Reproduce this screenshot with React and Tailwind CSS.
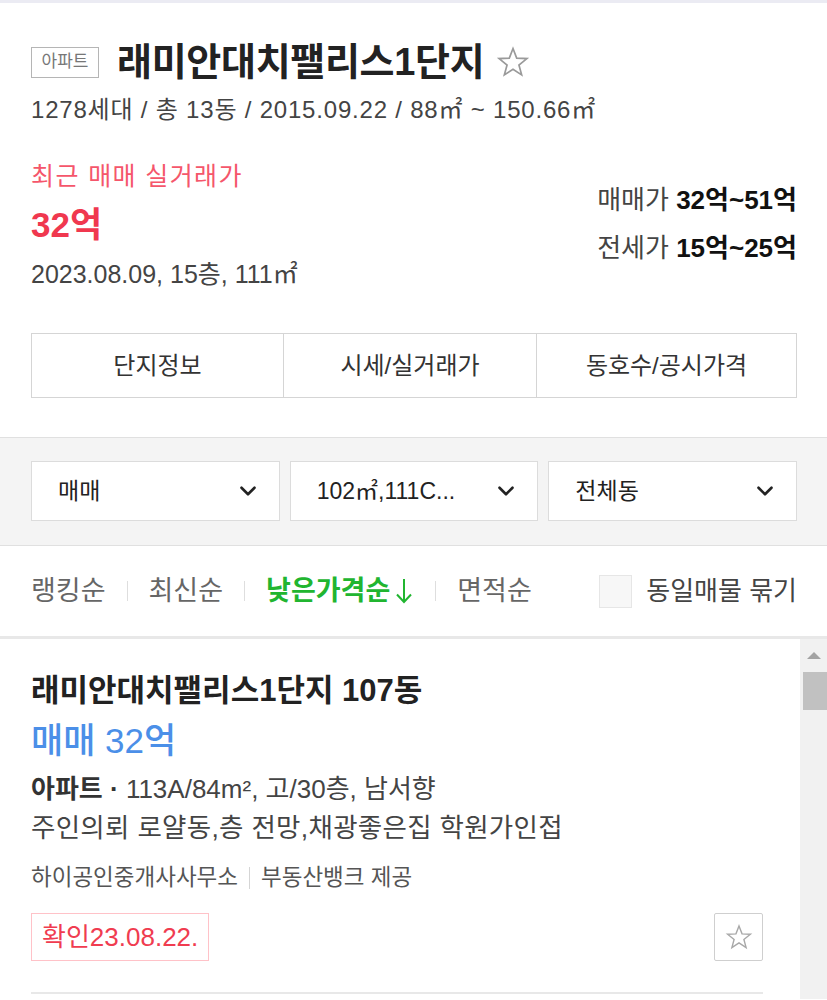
import { ChevronDown } from "lucide-react";

function StarOutline({ className }) {
  return (
    <svg viewBox="0 0 24 24" className={className} fill="none" stroke="currentColor" strokeWidth="1.2" strokeLinejoin="miter">
      <polygon points="12,2.5 14.6,9.3 21.8,9.6 16.2,14.1 18.1,21.1 12,17.1 5.9,21.1 7.8,14.1 2.2,9.6 9.4,9.3" />
    </svg>
  );
}

function DownArrow() {
  return (
    <svg viewBox="0 0 20 28" className="ml-[4px] h-[28px] w-[20px]" fill="none" stroke="#21b530" strokeWidth="2">
      <path d="M10 2 V25 M3 17.5 L10 25 L17 17.5" />
    </svg>
  );
}

function SelectBox({ label }) {
  return (
    <div className="flex h-[60px] flex-1 items-center justify-between border border-[#dcdcdc] bg-white pl-[26px] pr-[18px] text-[23px] text-[#222]">
      <span>{label}</span>
      <ChevronDown size={26} strokeWidth={2.4} className="text-[#222]" />
    </div>
  );
}

export default function App() {
  const sorts = ["랭킹순", "최신순", "낮은가격순", "면적순"];

  return (
    <div className="h-[1000px] w-[827px] overflow-hidden bg-white font-['Liberation_Sans','Noto_Sans_CJK_KR',sans-serif] text-[#333]">
      <div className="h-[3px] bg-[#ebebf3]" />

      {/* 단지 헤더 */}
      <section className="pl-[31px] pr-[30px] pb-[39px]">
        <div className="mt-[37px] flex h-[44px] items-center">
          <span className="flex h-[31px] w-[68px] items-center justify-center border border-[#b5b5b5] text-[17px] text-[#777]">아파트</span>
          <h1 className="ml-[18px] text-[38px] font-bold tracking-[-0.3px] text-[#222]">래미안대치팰리스1단지</h1>
          <StarOutline className="ml-[12px] h-[34px] w-[34px] text-[#9a9a9a]" />
        </div>
        <p className="mt-[11px] flex h-[30px] items-center text-[24px] tracking-[0.8px] text-[#444]">
          1278세대 / 총 13동 / 2015.09.22 / 88㎡ ~ 150.66㎡
        </p>

        <div className="mt-[37px] flex justify-between">
          <div>
            <p className="flex h-[30px] items-center text-[25px] tracking-[1.4px] text-[#f5566b]">최근 매매 실거래가</p>
            <p className="mt-[13px] flex h-[40px] items-center text-[35px] font-bold text-[#f0384f]">32억</p>
            <p className="mt-[15px] flex h-[30px] items-center text-[25px] text-[#444]">2023.08.09, 15층, 111㎡</p>
          </div>
          <div className="mt-[23px] flex flex-col items-end gap-[18px] text-[26px]">
            <p className="flex h-[30px] items-center text-[#444]">
              매매가&nbsp;<b className="text-[#111]">32억~51억</b>
            </p>
            <p className="flex h-[30px] items-center text-[#444]">
              전세가&nbsp;<b className="text-[#111]">15억~25억</b>
            </p>
          </div>
        </div>

        <div className="mt-[43px] grid h-[65px] grid-cols-[251px_253px_1fr] border border-[#d5d5d5] text-[24px] text-[#333]">
          <div className="flex items-center justify-center">단지정보</div>
          <div className="flex items-center justify-center border-l border-[#d5d5d5]">시세/실거래가</div>
          <div className="flex items-center justify-center border-l border-[#d5d5d5]">동호수/공시가격</div>
        </div>
      </section>

      {/* 필터 */}
      <section className="flex gap-[10px] border-y border-[#e0e0e0] bg-[#f4f4f4] pl-[31px] pr-[30px] pt-[23px] pb-[24px]">
        <SelectBox label="매매" />
        <SelectBox label="102㎡,111C..." />
        <SelectBox label="전체동" />
      </section>

      {/* 정렬 */}
      <div className="flex h-[93px] items-center justify-between border-b-[3px] border-[#e8e8e8] pl-[31px] pr-[30px]">
        <div className="flex items-center text-[27px]">
          {sorts.map((s, i) => (
            <div key={s} className="flex items-center">
              {i > 0 && <span className="mx-[21px] h-[20px] w-px bg-[#dedede]" />}
              {i === 2 ? (
                <span className="flex items-center font-bold text-[#21b530]">
                  {s}
                  <DownArrow />
                </span>
              ) : (
                <span className="text-[#666]">{s}</span>
              )}
            </div>
          ))}
        </div>
        <label className="flex items-center gap-[14px] text-[26px] text-[#444]">
          <span className="h-[33px] w-[33px] border border-[#e6e6e6] bg-[#f7f7f7]" />
          동일매물 묶기
        </label>
      </div>

      {/* 매물 목록 */}
      <div className="flex h-[360px]">
        <div className="flex-1 pl-[31px] pr-[37px] pt-[34px]">
          <h2 className="flex h-[36px] items-center text-[31px] font-bold text-[#222]">래미안대치팰리스1단지 107동</h2>
          <p className="mt-[10px] flex h-[44px] items-center text-[35px] font-medium text-[#4b8fe8]">매매 32억</p>
          <p className="mt-[10px] flex h-[32px] items-center text-[26px] text-[#444]">
            <b className="text-[#333]">아파트 ·</b>&nbsp;113A/84m², 고/30층, 남서향
          </p>
          <p className="mt-[8px] flex h-[32px] items-center text-[26.5px] tracking-[0.3px] text-[#444]">주인의뢰 로얄동,층 전망,채광좋은집 학원가인접</p>
          <p className="mt-[19px] flex h-[28px] items-center text-[22.5px] text-[#555]">
            하이공인중개사사무소
            <span className="mx-[11px] h-[22px] w-px bg-[#d5d5d5]" />
            부동산뱅크 제공
          </p>
          <div className="mt-[21px] flex items-center justify-between">
            <span className="flex h-[48px] items-center border border-[#ffc2c8] px-[10px] text-[26px] text-[#f03c50]">확인23.08.22.</span>
            <button className="flex h-[48px] w-[49px] items-center justify-center rounded-[2px] border border-[#cfcfcf] bg-white">
              <StarOutline className="h-[28px] w-[28px] text-[#a8a8a8]" />
            </button>
          </div>
          <div className="mt-[31px] h-[2px] bg-[#e8e8e8]" />
        </div>

        {/* 스크롤바 */}
        <div className="flex w-[27px] flex-col items-center bg-[#f1f1f1]">
          <div className="mt-[13px] h-0 w-0 border-x-[7px] border-b-[7px] border-x-transparent border-b-[#a3a3a3]" />
          <div className="mt-[13px] ml-[3px] h-[38px] w-[24px] bg-[#c1c1c1]" />
        </div>
      </div>
    </div>
  );
}
